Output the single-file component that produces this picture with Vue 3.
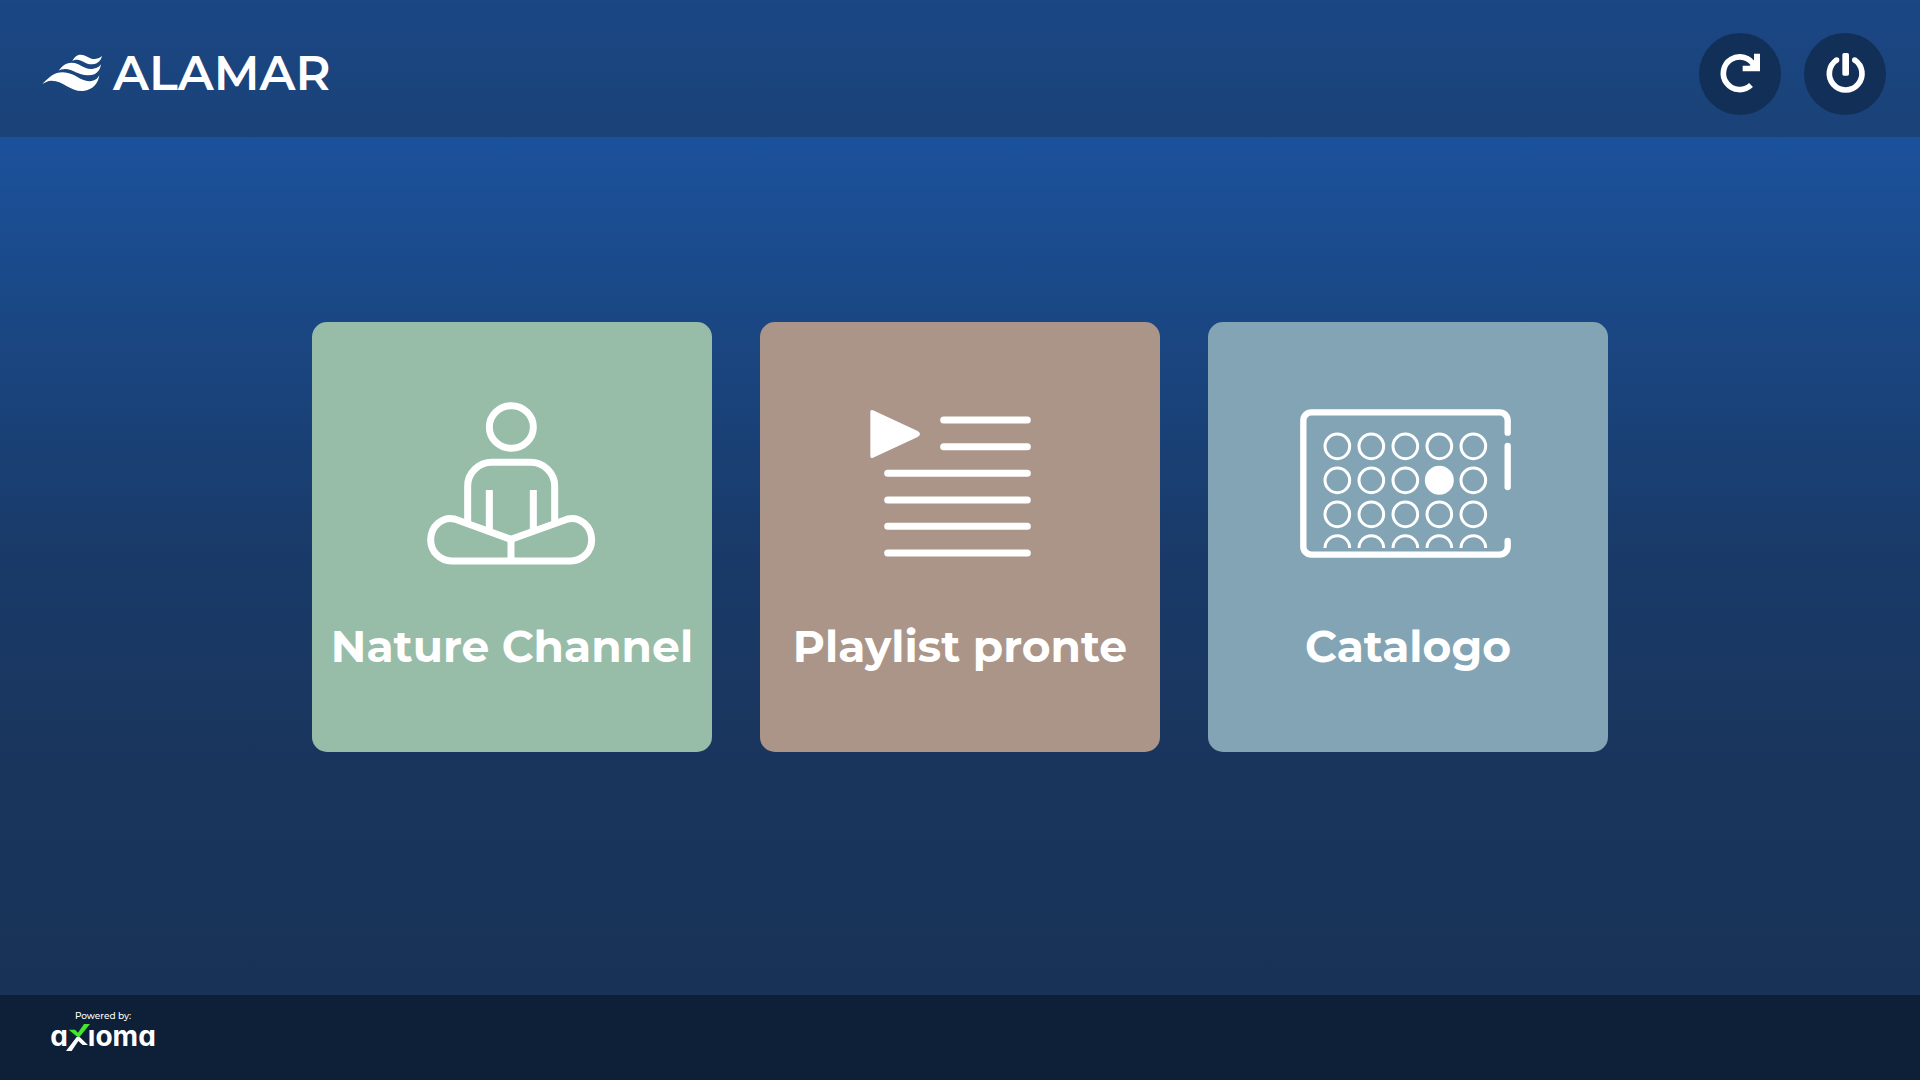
<template>
  <div class="page">
    <header class="topbar">
      <a class="brand" href="#" aria-label="Alamar">
        <svg class="brand-mark" viewBox="36 42 180 114" aria-hidden="true">
          <path d="M127 63C133 52 140 44 152 44C170 44 178 58 195 57C205 56 211 53 216 48C213 60 205 72 187 73C167 74 155 58 140 59C133 59 130 61 127 63Z" />
          <path d="M86 92C95 80 105 68 125 68C150 68 160 88 185 87C200 86 208 80 213 73C210 92 200 106 175 106C145 107 130 87 105 87C97 87 90 90 86 92Z" />
          <path d="M37 132C60 110 72 97 98 97C135 97 150 125 180 124C195 123 203 115 208 106C205 128 190 150 160 153C120 155 100 122 65 122C52 122 45 128 37 132Z" />
        </svg>
        <span class="brand-name">ALAMAR</span>
      </a>
      <div class="actions">
        <button class="round-btn" type="button" aria-label="Ricarica">
          <svg viewBox="119 102 120 120" aria-hidden="true">
            <path class="line" d="M212 195A49 49 0 1 1 222 138" />
            <path d="M221 101H239V154H187V137H208L221 128Z" />
          </svg>
        </button>
        <button class="round-btn" type="button" aria-label="Spegni">
          <svg viewBox="435 102 120 120" aria-hidden="true">
            <path class="line" d="M470 120A49 49 0 1 0 524 120" />
            <rect x="487" y="99" width="20" height="68" rx="5" />
            <circle cx="470" cy="120" r="8" />
            <circle cx="524" cy="120" r="8" />
          </svg>
        </button>
      </div>
    </header>

    <main class="content">
      <button
        v-for="card in cards"
        :key="card.id"
        class="card"
        :class="card.id"
        type="button"
      >
        <svg v-if="card.id === 'nature'" class="card-icon" viewBox="-18 60 648 504" aria-hidden="true">
          <g class="outline">
            <ellipse cx="304" cy="141" rx="66" ry="64" />
            <path d="M173 425V318A73 71 0 0 1 246 247H361A73 71 0 0 1 434 318V425" />
            <path d="M238 330V450M370 330V450M303 478V543" />
            <path d="M303 478L134 417C98 408 62 438 62 480A63 63 0 0 0 125 543H482A63 63 0 0 0 545 480C545 438 509 408 473 417Z" />
          </g>
        </svg>
        <svg v-else-if="card.id === 'playlist'" class="card-icon" viewBox="6 30 648 504" aria-hidden="true">
          <path d="M61 65Q61 57 69 61L203 123Q217 132 203 141L69 203Q61 207 61 199Z" />
          <path class="rows" d="M281 90H532M281 170H532M113 250H532M113 330H532M113 409H532M113 489H532" />
        </svg>
        <svg v-else class="card-icon" viewBox="45 15 648 504" aria-hidden="true">
          <path class="frame" d="M668 113V76A24 24 0 0 0 644 52H79A24 24 0 0 0 55 76V455A24 24 0 0 0 79 479H644A24 24 0 0 0 668 455V438M668 153V276" />
          <template v-for="y in dotRows" :key="y">
            <circle
              v-for="x in dotCols"
              :key="x"
              class="dot"
              :class="{ on: x === 463 && y === 256 }"
              :cx="x"
              :cy="y"
              r="37"
            />
          </template>
          <path v-for="x in dotCols" :key="'half' + x" class="dot" :d="`M${x - 37} 459A37 37 0 0 1 ${x + 37} 459`" />
        </svg>
        <span class="card-title">{{ card.title }}</span>
      </button>
    </main>

    <footer class="bottombar">
      <div class="powered">
        <span class="powered-label">Powered by:</span>
        <span class="axioma">
          <span>a</span>
          <svg class="axioma-x" viewBox="105 129 72 87" aria-label="x">
            <path class="check" d="M113 149H132L141 158L159 132H177L143 174Z" />
            <path d="M146 171L171 195H155L142 183L122 213H105L137 171Z" />
          </svg>
          <span>ıoma</span>
        </span>
      </div>
    </footer>
  </div>
</template>

<script setup>
const cards = [
  { id: 'nature', title: 'Nature Channel' },
  { id: 'playlist', title: 'Playlist pronte' },
  { id: 'catalog', title: 'Catalogo' },
]

// centri dei dischi nell'icona del catalogo
const dotCols = [157, 259, 361, 463, 565]
const dotRows = [154, 256, 358]
</script>

<style>
body {
  margin: 0;
}
</style>

<style scoped>
.page {
  min-height: 100vh;
  display: flex;
  flex-direction: column;
  color: #fff;
  font-family: Montserrat, Inter, sans-serif;
  background: linear-gradient(180deg, #1b539e 0%, #1b519a 14%, #1a457f 33%, #193a68 52%, #19355c 72%, #183155 100%);
}
.topbar {
  box-sizing: border-box;
  height: 137px;
  padding: 10px 34px 0 42px;
  display: flex;
  align-items: center;
  justify-content: space-between;
  background: linear-gradient(180deg, #1a4785, #1a4277);
}
.brand {
  display: flex;
  align-items: center;
  gap: 11px;
  padding-bottom: 2px;
  color: #fff;
  text-decoration: none;
}
.brand-mark {
  width: 60px;
  height: 38px;
  fill: #fff;
}
.brand-name {
  font-size: 48px;
  line-height: 48px;
  font-weight: 600;
}
.actions {
  display: flex;
  gap: 23px;
}
.round-btn {
  width: 82px;
  height: 82px;
  padding: 0;
  border: none;
  border-radius: 50%;
  display: flex;
  align-items: center;
  justify-content: center;
  background: #122f57;
  cursor: pointer;
}
.round-btn svg {
  width: 40px;
  height: 40px;
  overflow: visible;
  fill: #fff;
}
.round-btn .line {
  fill: none;
  stroke: #fff;
  stroke-width: 17;
}
.content {
  flex: 1;
  display: flex;
  align-items: center;
  justify-content: center;
  flex-wrap: wrap;
  gap: 48px;
  padding: 24px 24px 82px;
}
.card {
  box-sizing: border-box;
  width: 400px;
  height: 430px;
  padding: 78px 0 0;
  border: none;
  border-radius: 15px;
  display: flex;
  flex-direction: column;
  align-items: center;
  gap: 50px;
  color: #fff;
  font-family: inherit;
  cursor: pointer;
}
.card.nature { background: #97bca8; }
.card.playlist { background: #ab9589; }
.card.catalog { background: #82a4b5; }
.card-icon {
  width: 216px;
  height: 168px;
  fill: #fff;
}
.outline {
  fill: none;
  stroke: #fff;
  stroke-width: 21;
}
.rows {
  stroke: #fff;
  stroke-width: 21;
  stroke-linecap: round;
}
.frame {
  fill: none;
  stroke: #fff;
  stroke-width: 19;
  stroke-linecap: round;
}
.dot {
  fill: none;
  stroke: #fff;
  stroke-width: 9;
}
.dot.on { fill: #fff; stroke-width: 13; }
.card-title {
  font-size: 44px;
  line-height: 56px;
  font-weight: 700;
  white-space: nowrap;
}
.bottombar {
  box-sizing: border-box;
  height: 85px;
  padding: 15px 49px;
  background: #0e2038;
}
.powered {
  width: 108px;
  display: flex;
  flex-direction: column;
  align-items: center;
}
.powered-label {
  font-size: 9px;
  line-height: 12px;
  font-weight: 500;
}
.axioma {
  display: flex;
  align-items: flex-start;
  font-family: Inter, sans-serif;
  font-size: 28px;
  line-height: 28px;
  font-weight: 700;
  font-feature-settings: "cv11";
}
.axioma-x {
  width: 24px;
  height: 29px;
  margin: 1px -2px 0;
  fill: #fff;
}
.axioma-x .check { fill: #43e62a; }
</style>
